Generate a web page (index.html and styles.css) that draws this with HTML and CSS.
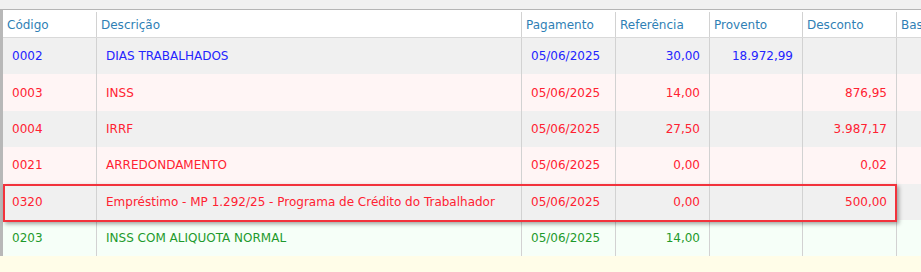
FILE: index.html
```html
<!DOCTYPE html>
<html lang="pt-BR">
<head>
<meta charset="utf-8">
<link rel="stylesheet" href="styles.css">
</head>
<body>
<div class="top"></div>
<div class="table">
  <div class="row head">
    <div class="cell">Código</div>
    <div class="cell">Descrição</div>
    <div class="cell">Pagamento</div>
    <div class="cell">Referência</div>
    <div class="cell">Provento</div>
    <div class="cell">Desconto</div>
    <div class="cell last">Base</div>
  </div>
  <div class="row gray blue">
    <div class="cell">0002</div>
    <div class="cell">DIAS TRABALHADOS</div>
    <div class="cell">05/06/2025</div>
    <div class="cell num">30,00</div>
    <div class="cell num">18.972,99</div>
    <div class="cell num"></div>
    <div class="cell last"></div>
  </div>
  <div class="row pink red">
    <div class="cell">0003</div>
    <div class="cell">INSS</div>
    <div class="cell">05/06/2025</div>
    <div class="cell num">14,00</div>
    <div class="cell num"></div>
    <div class="cell num">876,95</div>
    <div class="cell last"></div>
  </div>
  <div class="row gray red">
    <div class="cell">0004</div>
    <div class="cell">IRRF</div>
    <div class="cell">05/06/2025</div>
    <div class="cell num">27,50</div>
    <div class="cell num"></div>
    <div class="cell num">3.987,17</div>
    <div class="cell last"></div>
  </div>
  <div class="row pink red">
    <div class="cell">0021</div>
    <div class="cell">ARREDONDAMENTO</div>
    <div class="cell">05/06/2025</div>
    <div class="cell num">0,00</div>
    <div class="cell num"></div>
    <div class="cell num">0,02</div>
    <div class="cell last"></div>
  </div>
  <div class="row gray red marked">
    <div class="cell">0320</div>
    <div class="cell">Empréstimo - MP 1.292/25 - Programa de Crédito do Trabalhador</div>
    <div class="cell">05/06/2025</div>
    <div class="cell num">0,00</div>
    <div class="cell num"></div>
    <div class="cell num">500,00</div>
    <div class="cell last"></div>
    <div class="highlight"></div>
  </div>
  <div class="row mint green">
    <div class="cell">0203</div>
    <div class="cell">INSS COM ALIQUOTA NORMAL</div>
    <div class="cell">05/06/2025</div>
    <div class="cell num">14,00</div>
    <div class="cell num"></div>
    <div class="cell num"></div>
    <div class="cell last"></div>
  </div>
</div>
<div class="footer"></div>
</body>
</html>
```
FILE: styles.css
```css
html, body {
  margin: 0;
  padding: 0;
  width: 921px;
  height: 272px;
  overflow: hidden;
  background: #fffde8;
  font-family: "DejaVu Sans", Verdana, sans-serif;
  font-size: 12px;
}
.top {
  height: 9px;
  background: #f0f0f0;
  border-bottom: 1px solid #b4b4b4;
}
.table {
  border-left: 3px solid #b8b8b8;
}
.row {
  display: grid;
  grid-template-columns: 94px 425px 94px 94px 93px 94px 1fr;
  height: 36.4px;
  position: relative;
}
.row.head {
  height: 28px;
  padding-top: 2px;
  background: #ffffff;
  border-bottom: 1px solid #d9d9d9;
  box-sizing: border-box;
  color: #2f7fb5;
}
.cell {
  box-sizing: border-box;
  border-right: 1px solid #d2d2d2;
  display: flex;
  align-items: center;
  padding-left: 9px;
  padding-right: 9px;
  white-space: nowrap;
  overflow: hidden;
  min-width: 0;
}
.cell.last {
  border-right: none;
  padding-right: 0;
}
.head .cell {
  padding-left: 4px;
}
.cell.num {
  justify-content: flex-end;
}
.gray { background: #f0f0f0; }
.pink { background: #fff5f5; }
.mint { background: #f6fff8; }
.blue { color: #2424ff; }
.red { color: #ff2232; }
.green { color: #1e9a2c; }
.marked { z-index: 2; }
.highlight {
  position: absolute;
  left: 0;
  top: 0;
  width: 894px;
  height: 38px;
  box-sizing: border-box;
  border: 2px solid #f2323c;
  box-shadow: 2px 2px 4px rgba(0, 0, 0, 0.35);
  pointer-events: none;
  z-index: 3;
}
.footer {
  height: 20px;
  background: #fffde8;
}
```
